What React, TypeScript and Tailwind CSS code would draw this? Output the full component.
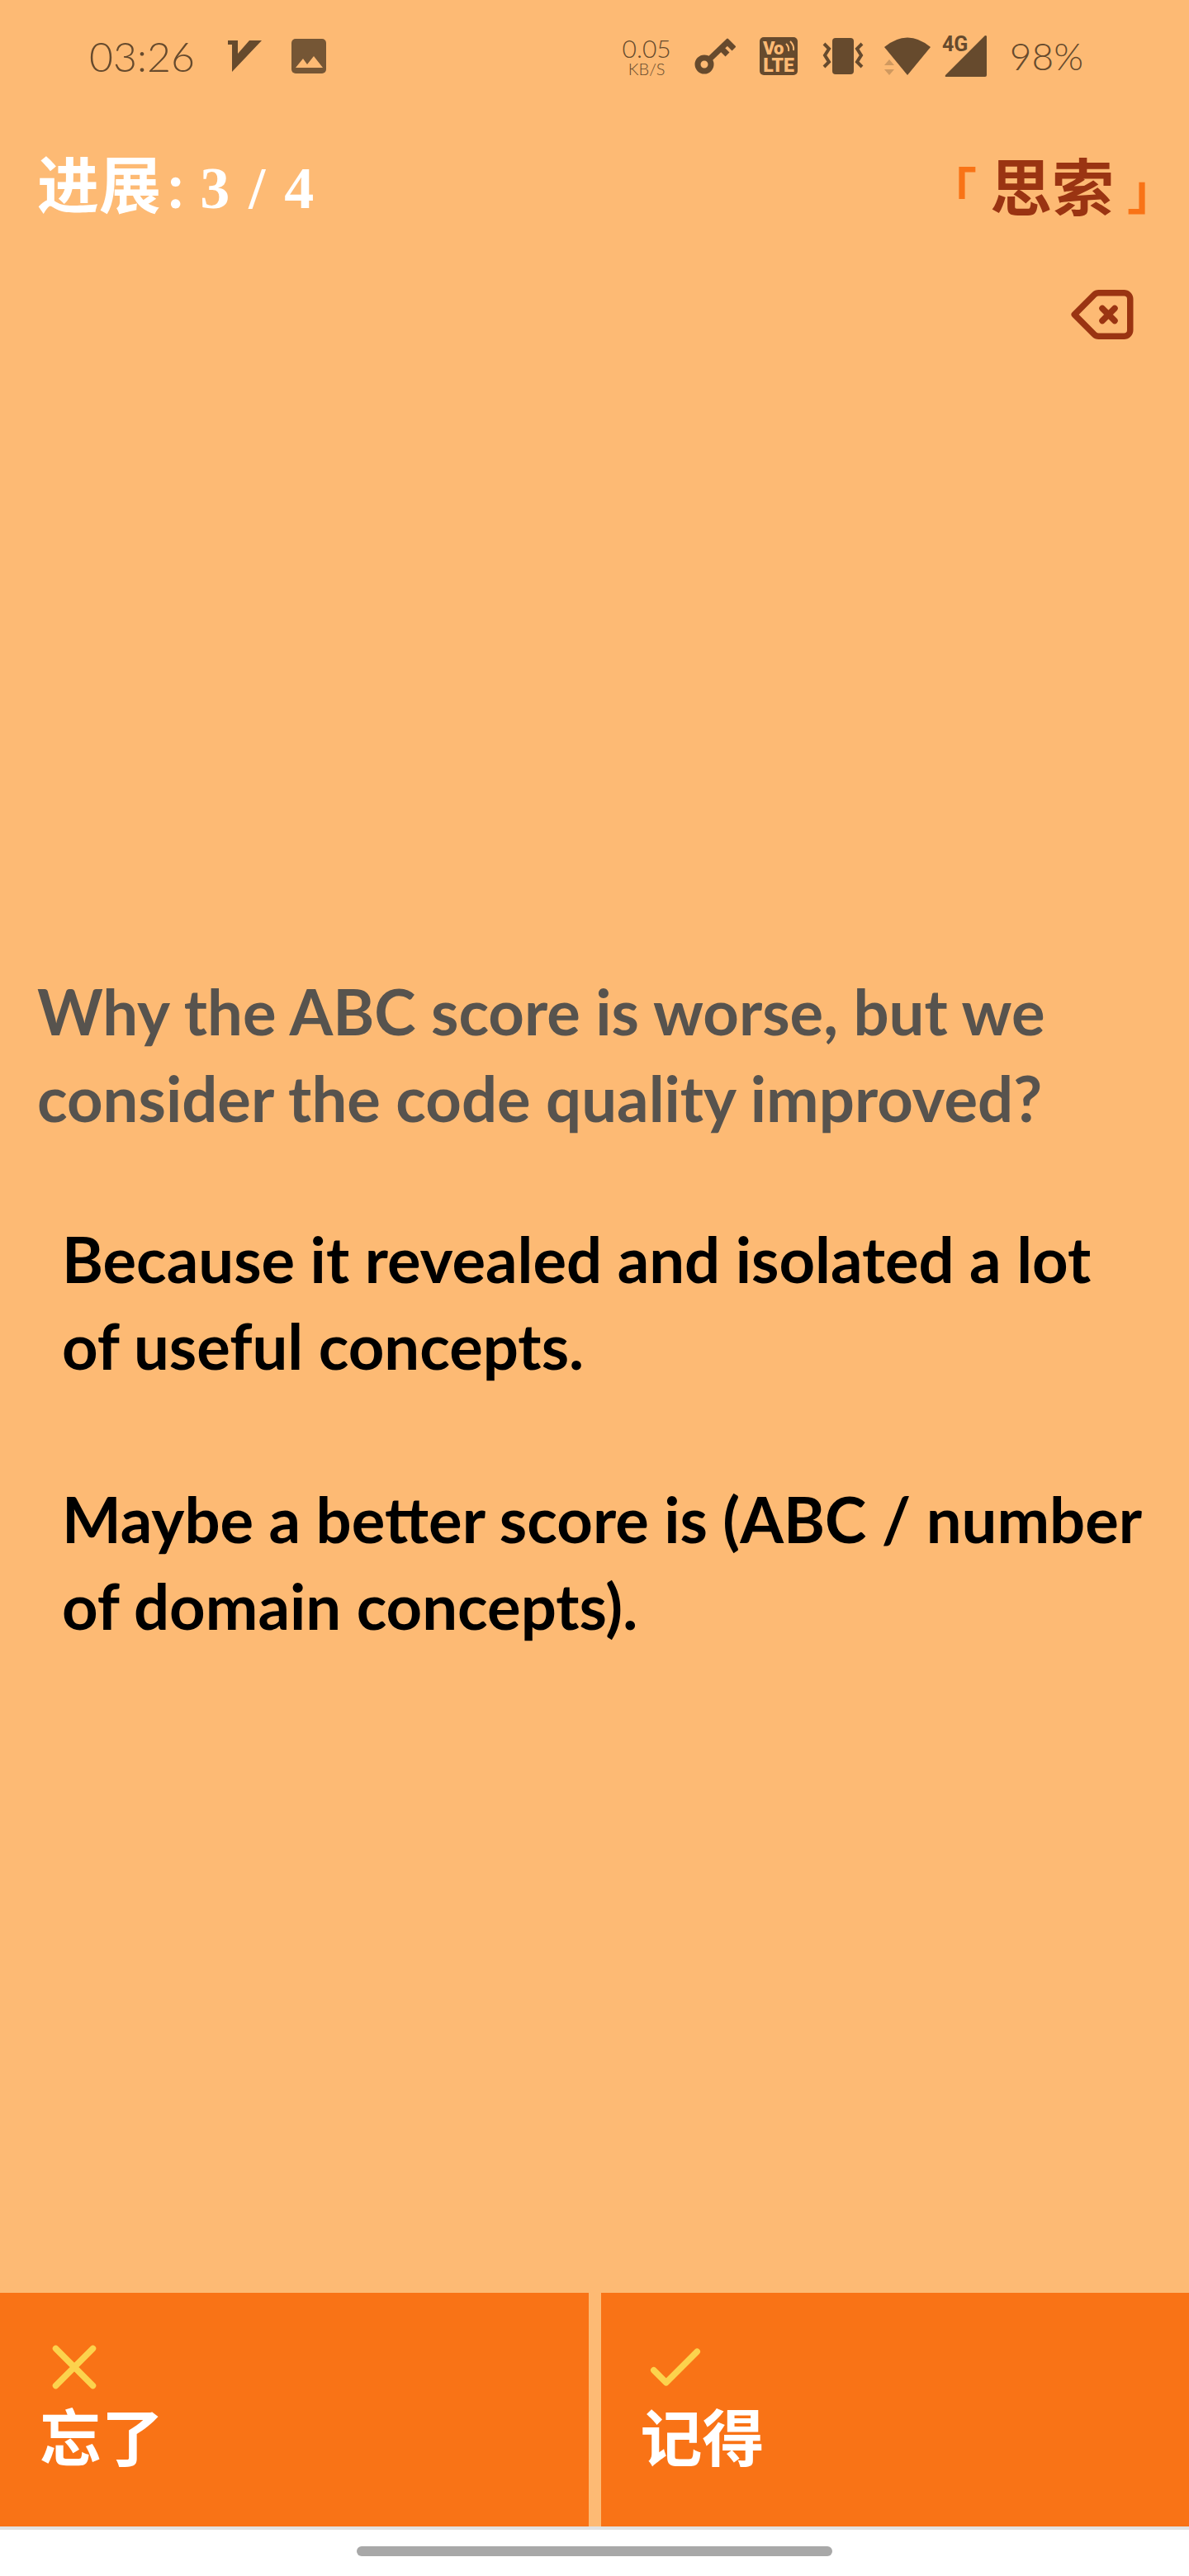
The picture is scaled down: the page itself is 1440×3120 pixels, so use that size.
import React from "react";

const INK = "#664a2d";

function StatusBar() {
  return (
    <div className="flex h-[136px] items-center justify-between pr-[128px] pl-[108px] font-['Lato',sans-serif] font-light text-[#664a2d]">
      <div className="flex items-center">
        <span className="text-[50px] leading-[60px]">03:26</span>
        <svg viewBox="0 0 42 38" className="ml-[40px] h-[38px] w-[42px]" fill={INK} aria-hidden="true">
          <path d="M0 0H12V16L26 0H41L5 38V5H0Z" />
        </svg>
        <svg viewBox="0 0 42 42" className="ml-[35px] h-[42px] w-[42px]" aria-hidden="true">
          <rect width="42" height="42" rx="5" fill="#755635" />
          <path d="M5 35L14 24L19 31L27 21L38 35Z" fill="#fdba74" />
        </svg>
      </div>
      <div className="flex items-center">
        <div className="flex flex-col items-center">
          <span className="text-[30px] leading-[30px]">0.05</span>
          <span className="text-[20px] leading-[20px]">KB/S</span>
        </div>
        <svg viewBox="0 0 50 44" className="ml-[28px] h-[44px] w-[50px]" fill="none" stroke={INK} aria-hidden="true">
          <circle cx="12" cy="32" r="8" strokeWidth="7" />
          <path d="M18 26L42 3" strokeWidth="7" />
          <path d="M38 3L48 13M31 11L40 20" strokeWidth="7" />
        </svg>
        <svg viewBox="-2 -5 50 56" className="ml-[27px] h-[56px] w-[50px]" role="img" aria-label="VoLTE">
          <rect width="46" height="46" rx="5" fill={INK} />
          <g fill="#fdba74" fontFamily="Roboto, sans-serif" fontWeight="900">
            <text x="4" y="21" fontSize="22">V</text>
            <text x="17" y="21" fontSize="22">o</text>
            <text x="23" y="42" fontSize="23" textAnchor="middle">LTE</text>
          </g>
          <path d="M32 8Q36 12 35 17M37 5Q42 10 41 16" fill="none" stroke="#fdba74" strokeWidth="2" />
        </svg>
        <svg viewBox="0 0 50 46" className="ml-[28px] h-[46px] w-[50px]" aria-hidden="true">
          <rect x="12" y="1" width="26" height="44" rx="4" fill={INK} />
          <path d="M2 8L8 14L3 22L8 30L2 36M48 8L42 14L47 22L42 30L48 36" fill="none" stroke={INK} strokeWidth="4" />
        </svg>
        <svg viewBox="0 0 56 46" className="ml-[25px] h-[46px] w-[56px]" aria-hidden="true">
          <path d="M0 12Q28 -11 56 12L28 46Z" fill={INK} />
          <path d="M0 34L6 27L12 34ZM0 39H12L6 46Z" fill="#d0995f" />
        </svg>
        <svg viewBox="-2 -6 58 62" className="ml-[12px] h-[62px] w-[58px]" role="img" aria-label="4G">
          <path d="M4 48L52 0Q54 0 54 1V48Q54 50 52 50H5Q3 50 4 48Z" fill={INK} />
          <text x="0" y="19" fontSize="25" fontWeight="700" fontFamily="Roboto, sans-serif" fill={INK}>4G</text>
        </svg>
        <span className="ml-[26px] text-[46px] leading-[60px]">98%</span>
      </div>
    </div>
  );
}

function HeroIcon({ d, className }: { d: string; className: string }) {
  return (
    <svg viewBox="0 0 24 24" className={className} fill="none" stroke="currentColor" strokeWidth="2" strokeLinecap="round" strokeLinejoin="round" aria-hidden="true">
      <path d={d} />
    </svg>
  );
}

function AnswerButton({ label, d }: { label: string; d: string }) {
  return (
    <button type="button" className="flex flex-1 flex-col items-start bg-[#f97316] px-[48px] pt-[45px] pb-[68px] text-left">
      <HeroIcon d={d} className="-ml-[3px] h-[90px] w-[90px] text-[#fcd34d]" />
      <span className="text-[75px] leading-[80px] font-bold text-white">{label}</span>
    </button>
  );
}

export default function App() {
  return (
    <div className="flex min-h-screen flex-col bg-[#fdba74] font-['Lato','Noto_Sans_CJK_SC',sans-serif]">
      <StatusBar />
      <header className="flex flex-col px-[45px] pt-[35px]">
        <div className="flex items-center justify-between">
          <h1 className="flex items-baseline text-[75px] leading-[105px] font-bold text-white">
            <span>进展</span>
            <span className="ml-[8px]">:</span>
            <span className="ml-[20px] flex gap-[23px] font-['Liberation_Serif',serif] text-[72px]">
              <span>3</span>
              <span>/</span>
              <span>4</span>
            </span>
          </h1>
          <div className="flex items-center gap-[16px] font-bold">
            <span className="pt-[10px] text-[60px] leading-[95px] text-[#f97316]">｢</span>
            <span className="text-[75px] leading-[105px] text-[#9a3412]">思索</span>
            <span className="pt-[10px] text-[60px] leading-[95px] text-[#f97316]">｣</span>
          </div>
        </div>
        <button type="button" aria-label="Delete" className="mt-[55px] mr-[15px] self-end text-[#9a3412]">
          <HeroIcon
            className="h-[90px] w-[90px]"
            d="M12 14l2-2m0 0l2-2m-2 2l-2-2m2 2l2 2M3 12l6.414 6.414a2 2 0 001.414.586H19a2 2 0 002-2V7a2 2 0 00-2-2h-8.172a2 2 0 00-1.414.586L3 12z"
          />
        </button>
      </header>
      <main className="flex flex-1 flex-col justify-center gap-[90px] pr-[30px] pb-[35px] pl-[45px] text-[76px] leading-[105px] font-bold">
        <h2 className="text-[#57534e]">
          Why the ABC score is worse, but we
          <br />
          consider the code quality improved?
        </h2>
        <div className="flex flex-col gap-[105px] pl-[30px] text-black">
          <p>
            Because it revealed and isolated a lot
            <br />
            of useful concepts.
          </p>
          <p>
            Maybe a better score is (ABC / number
            <br />
            of domain concepts).
          </p>
        </div>
      </main>
      <footer>
        <div className="flex gap-[15px]">
          <AnswerButton label="忘了" d="M6 18L18 6M6 6l12 12" />
          <AnswerButton label="记得" d="M5 13l4 4L19 7" />
        </div>
        <div className="flex h-[60px] justify-center border-t-4 border-[#e2e2e2] bg-white pt-5">
          <div className="h-3 w-[40%] rounded-full bg-[#a8a8a8]" />
        </div>
      </footer>
    </div>
  );
}
